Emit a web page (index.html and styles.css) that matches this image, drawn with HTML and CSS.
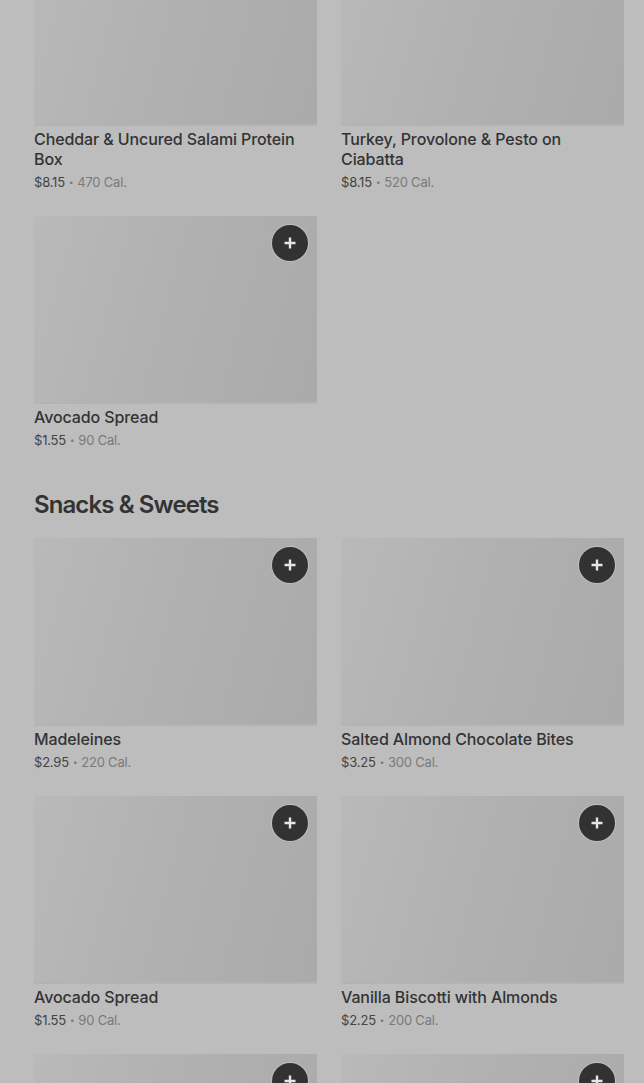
FILE: index.html
```html
<!DOCTYPE html>
<html>
<head>
<meta charset="utf-8">
<link rel="stylesheet" href="styles.css">
</head>
<body>
<main class="menu">
  <section class="section first">
    <div class="grid">
      <article class="card">
        <div class="thumb"></div>
        <h3 class="title">Cheddar &amp; Uncured Salami Protein Box</h3>
        <p class="meta"><span class="price">$8.15</span><span class="dot">•</span>470 Cal.</p>
      </article>
      <article class="card">
        <div class="thumb"></div>
        <h3 class="title">Turkey, Provolone &amp; Pesto on Ciabatta</h3>
        <p class="meta"><span class="price">$8.15</span><span class="dot">•</span>520 Cal.</p>
      </article>
      <article class="card">
        <div class="thumb"><button class="add" aria-label="Add"><svg viewBox="0 0 14 14" width="14" height="14"><path d="M7 1.5v11M1.5 7h11" stroke="#e6e6e6" stroke-width="2.4" fill="none"/></svg></button></div>
        <h3 class="title">Avocado Spread</h3>
        <p class="meta"><span class="price">$1.55</span><span class="dot">•</span>90 Cal.</p>
      </article>
    </div>
  </section>
  <section class="section">
    <h2 class="heading">Snacks &amp; Sweets</h2>
    <div class="grid">
      <article class="card">
        <div class="thumb"><button class="add" aria-label="Add"><svg viewBox="0 0 14 14" width="14" height="14"><path d="M7 1.5v11M1.5 7h11" stroke="#e6e6e6" stroke-width="2.4" fill="none"/></svg></button></div>
        <h3 class="title">Madeleines</h3>
        <p class="meta"><span class="price">$2.95</span><span class="dot">•</span>220 Cal.</p>
      </article>
      <article class="card">
        <div class="thumb"><button class="add" aria-label="Add"><svg viewBox="0 0 14 14" width="14" height="14"><path d="M7 1.5v11M1.5 7h11" stroke="#e6e6e6" stroke-width="2.4" fill="none"/></svg></button></div>
        <h3 class="title">Salted Almond Chocolate Bites</h3>
        <p class="meta"><span class="price">$3.25</span><span class="dot">•</span>300 Cal.</p>
      </article>
      <article class="card">
        <div class="thumb"><button class="add" aria-label="Add"><svg viewBox="0 0 14 14" width="14" height="14"><path d="M7 1.5v11M1.5 7h11" stroke="#e6e6e6" stroke-width="2.4" fill="none"/></svg></button></div>
        <h3 class="title">Avocado Spread</h3>
        <p class="meta"><span class="price">$1.55</span><span class="dot">•</span>90 Cal.</p>
      </article>
      <article class="card">
        <div class="thumb"><button class="add" aria-label="Add"><svg viewBox="0 0 14 14" width="14" height="14"><path d="M7 1.5v11M1.5 7h11" stroke="#e6e6e6" stroke-width="2.4" fill="none"/></svg></button></div>
        <h3 class="title">Vanilla Biscotti with Almonds</h3>
        <p class="meta"><span class="price">$2.25</span><span class="dot">•</span>200 Cal.</p>
      </article>
      <article class="card">
        <div class="thumb"><button class="add" aria-label="Add"><svg viewBox="0 0 14 14" width="14" height="14"><path d="M7 1.5v11M1.5 7h11" stroke="#e6e6e6" stroke-width="2.4" fill="none"/></svg></button></div>
      </article>
      <article class="card">
        <div class="thumb"><button class="add" aria-label="Add"><svg viewBox="0 0 14 14" width="14" height="14"><path d="M7 1.5v11M1.5 7h11" stroke="#e6e6e6" stroke-width="2.4" fill="none"/></svg></button></div>
      </article>
    </div>
  </section>
</main>
</body>
</html>
```

FILE: styles.css
```css
html, body {
  margin: 0;
  padding: 0;
  background: #bdbdbd;
  overflow: hidden;
}
body {
  font-family: Inter, "Liberation Sans", sans-serif;
  color: #333;
}
.menu {
  padding: 0 20px 0 34px;
  margin-top: -62px;
}
.grid {
  display: grid;
  grid-template-columns: 283px 283px;
  column-gap: 24px;
  row-gap: 24px;
}
.card {
  display: flex;
  flex-direction: column;
}
.thumb {
  position: relative;
  height: 188px;
  background: linear-gradient(105deg, #b9b9b9 0%, #b1b1b1 45%, #aaaaaa 100%);
  box-shadow: inset 0 -2px 0 #b3b3b3;
}
.add {
  position: absolute;
  top: 9px;
  right: 9px;
  width: 36px;
  height: 36px;
  border: none;
  border-radius: 50%;
  background: #323232;
  padding: 0;
  display: flex;
  align-items: center;
  justify-content: center;
  box-shadow: 0 0 0 1px rgba(210, 210, 210, 0.5);
}
.add svg {
  display: block;
}
.title {
  margin: 3px 0 0;
  font-size: 16px;
  line-height: 20px;
  font-weight: 500;
  letter-spacing: -0.1px;
  color: #333;
}
.meta {
  margin: 3px 0 0;
  font-size: 13px;
  line-height: 20px;
  color: #7a7a7a;
  letter-spacing: -0.2px;
}
.price {
  color: #444;
}
.dot {
  font-size: 8px;
  vertical-align: 2px;
  margin: 0 4px;
  color: #777;
}
.heading {
  margin: 39px 0 17px;
  font-size: 24px;
  line-height: 32px;
  font-weight: 600;
  letter-spacing: -0.9px;
  color: #333;
}
```
